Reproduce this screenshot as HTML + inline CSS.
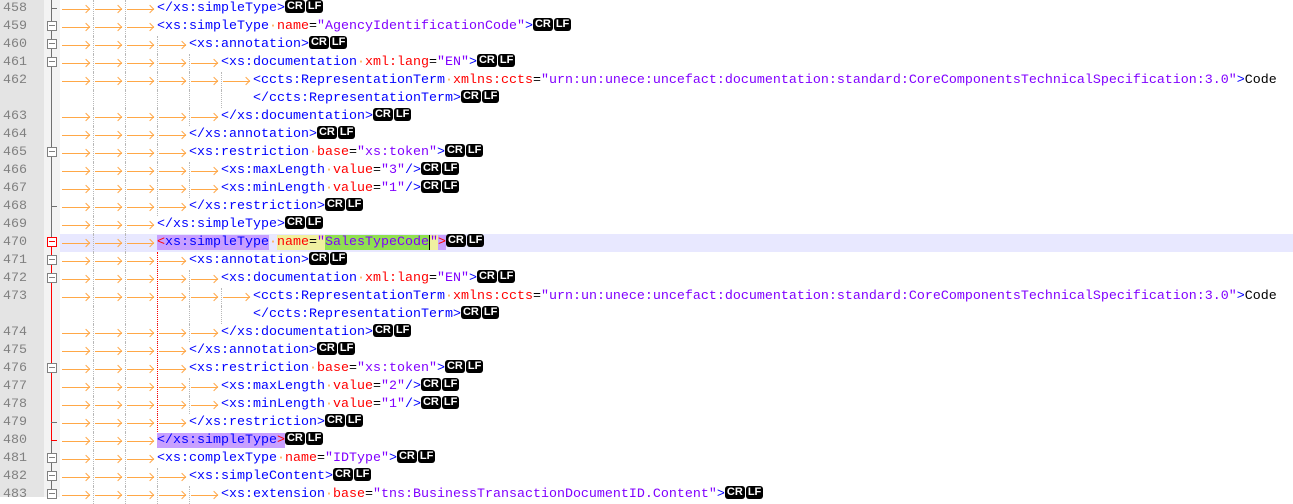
<!DOCTYPE html><html><head><meta charset="utf-8"><style>
body{margin:0;width:1293px;height:497px;overflow:hidden;background:#fff;position:relative;font-family:"Liberation Mono",monospace;font-size:13.33px}
#gn{position:absolute;left:0;top:0;width:44px;height:497px;background:#e4e4e4}
#fm{position:absolute;left:44px;top:0;width:16px;height:497px;background:#f3f3f3}
.v{position:absolute;z-index:5;width:0;height:0}
.l{position:absolute;left:0;height:18px;width:1293px;line-height:18px;white-space:pre}
.n{position:absolute;left:0;width:27px;text-align:right;color:#808080}
.c{position:absolute;left:61px;top:0;height:18px}
.t{display:inline-block;width:32px;height:18px;vertical-align:top;position:relative;box-sizing:border-box}
.t+.t,.g+.t,.g+.g{border-left:1px dotted #b8b8b8}
.t::before{content:"";position:absolute;left:1px;right:3px;top:9px;height:1px;background:#ffa848}
.t::after{content:"";position:absolute;right:4px;top:6px;width:5px;height:5px;border-top:1px solid #ffa848;border-right:1px solid #ffa848;transform:rotate(45deg)}
.g{display:inline-block;width:32px;height:18px;vertical-align:top;box-sizing:border-box}
.b{color:#0000ff}.r{color:#ff0000}.p{color:#8000ff}.k{color:#000}.d{color:#ffa848}
.e{display:inline-block;background:#000;color:#fff;font:bold 11px "Liberation Sans",sans-serif;line-height:13px;height:13px;padding:0 2px;border-radius:3px;vertical-align:middle;margin:0 1px 0 0;position:relative;top:-1px}
.fb{position:absolute;z-index:6;left:47px;width:10px;height:10px;border:1px solid #808080;background:#fff;box-sizing:border-box}
.fb::after{content:"";position:absolute;left:1px;right:1px;top:3px;height:1px;background:#808080}
.fr{border-color:#f00}.fr::after{background:#f00}
</style></head><body>
<div id="gn"></div><div id="fm"></div>
<div class="v" style="left:51px;top:0;height:497px;border-left:1px solid #707070"></div>
<div class="v" style="left:51px;top:8px;width:6px;border-top:1px solid #707070"></div>
<div class="v" style="left:51px;top:243px;height:198px;border-left:1px solid #f00"></div>
<div class="v" style="left:51px;top:440px;width:6px;border-top:1px solid #f00"></div>
<div class="v" style="left:51px;top:422px;width:6px;border-top:1px solid #707070"></div>
<div class="v" style="left:51px;top:206px;width:6px;border-top:1px solid #707070"></div>
<div class="v" style="left:157px;top:252px;height:180px;border-left:1px dotted #f00"></div>
<div class="fb" style="top:21px"></div><div class="fb" style="top:39px"></div><div class="fb" style="top:57px"></div>
<div class="fb" style="top:147px"></div>
<div class="fb fr" style="top:237px"></div><div class="fb" style="top:255px"></div><div class="fb" style="top:273px"></div>
<div class="fb" style="top:363px"></div><div class="fb" style="top:453px"></div><div class="fb" style="top:471px"></div><div class="fb" style="top:489px"></div>

<div class="l" style="top:0"><span class="n">458</span><span class="c"><i class="t"></i><i class="t"></i><i class="t"></i><span class="b">&lt;/xs:simpleType&gt;</span><b class="e">CR</b><b class="e">LF</b></span></div>
<div class="l" style="top:18px"><span class="n">459</span><span class="c"><i class="t"></i><i class="t"></i><i class="t"></i><span class="b">&lt;xs:simpleType</span><span class="d">·</span><span class="r">name</span><span class="k">=</span><span class="p">"AgencyIdentificationCode"</span><span class="b">&gt;</span><b class="e">CR</b><b class="e">LF</b></span></div>
<div class="l" style="top:36px"><span class="n">460</span><span class="c"><i class="t"></i><i class="t"></i><i class="t"></i><i class="t"></i><span class="b">&lt;xs:annotation&gt;</span><b class="e">CR</b><b class="e">LF</b></span></div>
<div class="l" style="top:54px"><span class="n">461</span><span class="c"><i class="t"></i><i class="t"></i><i class="t"></i><i class="t"></i><i class="t"></i><span class="b">&lt;xs:documentation</span><span class="d">·</span><span class="r">xml:lang</span><span class="k">=</span><span class="p">"EN"</span><span class="b">&gt;</span><b class="e">CR</b><b class="e">LF</b></span></div>
<div class="l" style="top:72px"><span class="n">462</span><span class="c"><i class="t"></i><i class="t"></i><i class="t"></i><i class="t"></i><i class="t"></i><i class="t"></i><span class="b">&lt;ccts:RepresentationTerm</span><span class="d">·</span><span class="r">xmlns:ccts</span><span class="k">=</span><span class="p">"urn:un:unece:uncefact:documentation:standard:CoreComponentsTechnicalSpecification:3.0"</span><span class="b">&gt;</span><span class="k">Code</span></span></div>
<div class="l" style="top:90px"><span class="c"><i class="g"></i><i class="g"></i><i class="g"></i><i class="g"></i><i class="g"></i><i class="g"></i><span class="b">&lt;/ccts:RepresentationTerm&gt;</span><b class="e">CR</b><b class="e">LF</b></span></div>
<div class="l" style="top:108px"><span class="n">463</span><span class="c"><i class="t"></i><i class="t"></i><i class="t"></i><i class="t"></i><i class="t"></i><span class="b">&lt;/xs:documentation&gt;</span><b class="e">CR</b><b class="e">LF</b></span></div>
<div class="l" style="top:126px"><span class="n">464</span><span class="c"><i class="t"></i><i class="t"></i><i class="t"></i><i class="t"></i><span class="b">&lt;/xs:annotation&gt;</span><b class="e">CR</b><b class="e">LF</b></span></div>
<div class="l" style="top:144px"><span class="n">465</span><span class="c"><i class="t"></i><i class="t"></i><i class="t"></i><i class="t"></i><span class="b">&lt;xs:restriction</span><span class="d">·</span><span class="r">base</span><span class="k">=</span><span class="p">"xs:token"</span><span class="b">&gt;</span><b class="e">CR</b><b class="e">LF</b></span></div>
<div class="l" style="top:162px"><span class="n">466</span><span class="c"><i class="t"></i><i class="t"></i><i class="t"></i><i class="t"></i><i class="t"></i><span class="b">&lt;xs:maxLength</span><span class="d">·</span><span class="r">value</span><span class="k">=</span><span class="p">"3"</span><span class="b">/&gt;</span><b class="e">CR</b><b class="e">LF</b></span></div>
<div class="l" style="top:180px"><span class="n">467</span><span class="c"><i class="t"></i><i class="t"></i><i class="t"></i><i class="t"></i><i class="t"></i><span class="b">&lt;xs:minLength</span><span class="d">·</span><span class="r">value</span><span class="k">=</span><span class="p">"1"</span><span class="b">/&gt;</span><b class="e">CR</b><b class="e">LF</b></span></div>
<div class="l" style="top:198px"><span class="n">468</span><span class="c"><i class="t"></i><i class="t"></i><i class="t"></i><i class="t"></i><span class="b">&lt;/xs:restriction&gt;</span><b class="e">CR</b><b class="e">LF</b></span></div>
<div class="l" style="top:216px"><span class="n">469</span><span class="c"><i class="t"></i><i class="t"></i><i class="t"></i><span class="b">&lt;/xs:simpleType&gt;</span><b class="e">CR</b><b class="e">LF</b></span></div>
<div class="l" style="top:234px;left:60px;width:1233px;background:#e8e8ff"></div>
<div class="l" style="top:234px"><span class="n">470</span><span class="c"><i class="t"></i><i class="t"></i><i class="t"></i><span style="background:#c8a0ff"><span class="r">&lt;</span><span class="b">xs:simpleType</span></span><span class="d">·</span><span style="background:#f0f0a0"><span class="r">name</span><span class="k">=</span><span class="p">"</span></span><span class="p" style="background:#90e050;border-right:1px solid #000">SalesTypeCode</span><span class="p" style="background:#f0f0a0">"</span><span class="r" style="background:#c8a0ff">&gt;</span><b class="e">CR</b><b class="e">LF</b></span></div>
<div class="l" style="top:252px"><span class="n">471</span><span class="c"><i class="t"></i><i class="t"></i><i class="t"></i><i class="t"></i><span class="b">&lt;xs:annotation&gt;</span><b class="e">CR</b><b class="e">LF</b></span></div>
<div class="l" style="top:270px"><span class="n">472</span><span class="c"><i class="t"></i><i class="t"></i><i class="t"></i><i class="t"></i><i class="t"></i><span class="b">&lt;xs:documentation</span><span class="d">·</span><span class="r">xml:lang</span><span class="k">=</span><span class="p">"EN"</span><span class="b">&gt;</span><b class="e">CR</b><b class="e">LF</b></span></div>
<div class="l" style="top:288px"><span class="n">473</span><span class="c"><i class="t"></i><i class="t"></i><i class="t"></i><i class="t"></i><i class="t"></i><i class="t"></i><span class="b">&lt;ccts:RepresentationTerm</span><span class="d">·</span><span class="r">xmlns:ccts</span><span class="k">=</span><span class="p">"urn:un:unece:uncefact:documentation:standard:CoreComponentsTechnicalSpecification:3.0"</span><span class="b">&gt;</span><span class="k">Code</span></span></div>
<div class="l" style="top:306px"><span class="c"><i class="g"></i><i class="g"></i><i class="g"></i><i class="g"></i><i class="g"></i><i class="g"></i><span class="b">&lt;/ccts:RepresentationTerm&gt;</span><b class="e">CR</b><b class="e">LF</b></span></div>
<div class="l" style="top:324px"><span class="n">474</span><span class="c"><i class="t"></i><i class="t"></i><i class="t"></i><i class="t"></i><i class="t"></i><span class="b">&lt;/xs:documentation&gt;</span><b class="e">CR</b><b class="e">LF</b></span></div>
<div class="l" style="top:342px"><span class="n">475</span><span class="c"><i class="t"></i><i class="t"></i><i class="t"></i><i class="t"></i><span class="b">&lt;/xs:annotation&gt;</span><b class="e">CR</b><b class="e">LF</b></span></div>
<div class="l" style="top:360px"><span class="n">476</span><span class="c"><i class="t"></i><i class="t"></i><i class="t"></i><i class="t"></i><span class="b">&lt;xs:restriction</span><span class="d">·</span><span class="r">base</span><span class="k">=</span><span class="p">"xs:token"</span><span class="b">&gt;</span><b class="e">CR</b><b class="e">LF</b></span></div>
<div class="l" style="top:378px"><span class="n">477</span><span class="c"><i class="t"></i><i class="t"></i><i class="t"></i><i class="t"></i><i class="t"></i><span class="b">&lt;xs:maxLength</span><span class="d">·</span><span class="r">value</span><span class="k">=</span><span class="p">"2"</span><span class="b">/&gt;</span><b class="e">CR</b><b class="e">LF</b></span></div>
<div class="l" style="top:396px"><span class="n">478</span><span class="c"><i class="t"></i><i class="t"></i><i class="t"></i><i class="t"></i><i class="t"></i><span class="b">&lt;xs:minLength</span><span class="d">·</span><span class="r">value</span><span class="k">=</span><span class="p">"1"</span><span class="b">/&gt;</span><b class="e">CR</b><b class="e">LF</b></span></div>
<div class="l" style="top:414px"><span class="n">479</span><span class="c"><i class="t"></i><i class="t"></i><i class="t"></i><i class="t"></i><span class="b">&lt;/xs:restriction&gt;</span><b class="e">CR</b><b class="e">LF</b></span></div>
<div class="l" style="top:432px"><span class="n">480</span><span class="c"><i class="t"></i><i class="t"></i><i class="t"></i><span style="background:#c8a0ff"><span class="b">&lt;/xs:simpleType</span><span class="r">&gt;</span></span><b class="e">CR</b><b class="e">LF</b></span></div>
<div class="l" style="top:450px"><span class="n">481</span><span class="c"><i class="t"></i><i class="t"></i><i class="t"></i><span class="b">&lt;xs:complexType</span><span class="d">·</span><span class="r">name</span><span class="k">=</span><span class="p">"IDType"</span><span class="b">&gt;</span><b class="e">CR</b><b class="e">LF</b></span></div>
<div class="l" style="top:468px"><span class="n">482</span><span class="c"><i class="t"></i><i class="t"></i><i class="t"></i><i class="t"></i><span class="b">&lt;xs:simpleContent&gt;</span><b class="e">CR</b><b class="e">LF</b></span></div>
<div class="l" style="top:486px"><span class="n">483</span><span class="c"><i class="t"></i><i class="t"></i><i class="t"></i><i class="t"></i><i class="t"></i><span class="b">&lt;xs:extension</span><span class="d">·</span><span class="r">base</span><span class="k">=</span><span class="p">"tns:BusinessTransactionDocumentID.Content"</span><span class="b">&gt;</span><b class="e">CR</b><b class="e">LF</b></span></div>
</body></html>
